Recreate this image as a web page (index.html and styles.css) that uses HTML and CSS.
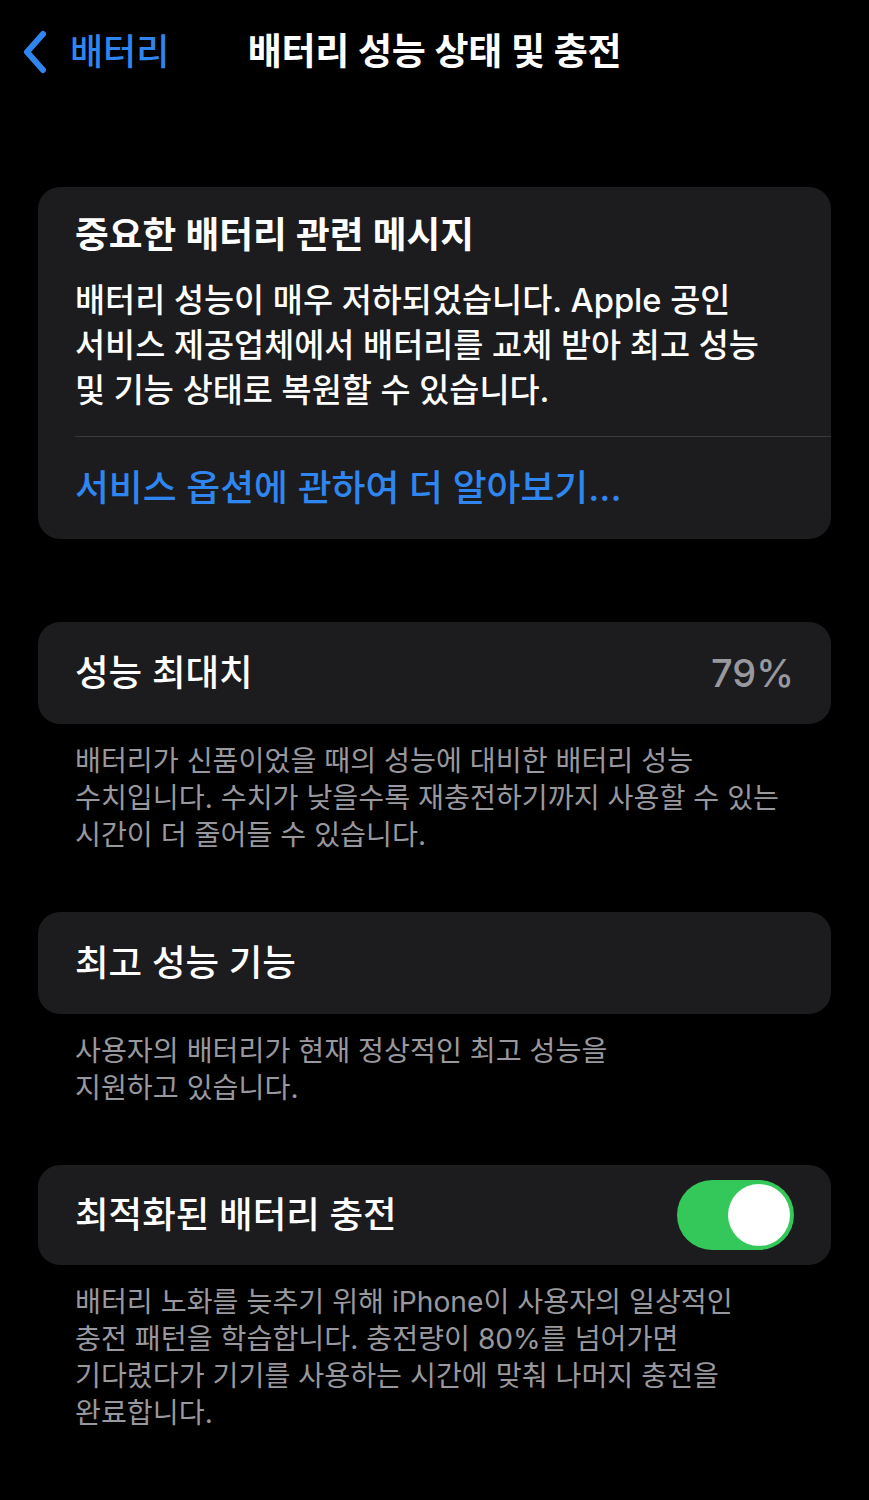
FILE: index.html
```html
<!DOCTYPE html>
<html lang="ko">
<head>
<meta charset="utf-8">
<title>배터리 성능 상태 및 충전</title>
<link rel="stylesheet" href="styles.css">
</head>
<body>
<header class="nav">
  <a class="back" href="#">
    <svg class="chevron" viewBox="0 0 26 44" width="26" height="44" aria-hidden="true">
      <path d="M21 4 L5 22 L21 40" fill="none" stroke="#2f86f0" stroke-width="6" stroke-linecap="round" stroke-linejoin="round"/>
    </svg>
    <span class="back-label">배터리</span>
  </a>
  <h1 class="nav-title">배터리 성능 상태 및 충전</h1>
  <span></span>
</header>

<main class="content">
  <section class="card message">
    <h2 class="message-title">중요한 배터리 관련 메시지</h2>
    <p class="message-body">배터리 성능이 매우 저하되었습니다. Apple 공인<br>서비스 제공업체에서 배터리를 교체 받아 최고 성능<br>및 기능 상태로 복원할 수 있습니다.</p>
    <div class="separator"></div>
    <a class="link" href="#">서비스 옵션에 관하여 더 알아보기...</a>
  </section>

  <section class="group first-group">
    <div class="card row">
      <span class="row-label">성능 최대치</span>
      <span class="row-value">79%</span>
    </div>
    <p class="footer">배터리가 신품이었을 때의 성능에 대비한 배터리 성능<br>수치입니다. 수치가 낮을수록 재충전하기까지 사용할 수 있는<br>시간이 더 줄어들 수 있습니다.</p>
  </section>

  <section class="group">
    <div class="card row">
      <span class="row-label">최고 성능 기능</span>
    </div>
    <p class="footer">사용자의 배터리가 현재 정상적인 최고 성능을<br>지원하고 있습니다.</p>
  </section>

  <section class="group">
    <div class="card row row-toggle">
      <span class="row-label">최적화된 배터리 충전</span>
      <span class="toggle on"><span class="knob"></span></span>
    </div>
    <p class="footer">배터리 노화를 늦추기 위해 iPhone이 사용자의 일상적인<br>충전 패턴을 학습합니다. 충전량이 80%를 넘어가면<br>기다렸다가 기기를 사용하는 시간에 맞춰 나머지 충전을<br>완료합니다.</p>
  </section>
</main>
</body>
</html>
```

FILE: styles.css
```css
* { box-sizing: border-box; }

html, body {
  margin: 0;
  padding: 0;
  background: #000;
}

body {
  font-family: "Inter", "Noto Sans CJK KR", sans-serif;
  color: #fff;
  width: 869px;
  min-height: 1500px;
}

.nav {
  display: grid;
  grid-template-columns: 1fr auto 1fr;
  align-items: center;
  height: 104px;
  padding: 0 22px;
}

.back {
  display: flex;
  align-items: center;
  gap: 22px;
  text-decoration: none;
  color: #2f86f0;
}

.chevron { display: block; }

.back-label {
  font-size: 36px;
  font-weight: 500;
  line-height: 44px;
}

.nav-title {
  margin: 0;
  font-size: 37px;
  font-weight: 600;
  line-height: 44px;
  letter-spacing: -0.3px;
}

.content {
  padding: 83px 38px 0;
}

.card {
  background: #1c1c1e;
  border-radius: 22px;
}

.message {
  padding: 25px 0 28px 37px;
}

.message-title {
  margin: 0;
  font-size: 36.7px;
  font-weight: 600;
  line-height: 46px;
}

.message-body {
  margin: 20px 37px 23px 0;
  font-size: 32.7px;
  font-weight: 500;
  line-height: 45px;
}

.separator {
  height: 1px;
  background: #3a3a3c;
}

.link {
  display: block;
  margin-top: 28px;
  font-size: 36.8px;
  font-weight: 500;
  line-height: 46px;
  color: #2f86f0;
  text-decoration: none;
}

.group { margin-top: 58px; }
.first-group { margin-top: 83px; }

.row {
  display: flex;
  align-items: center;
  justify-content: space-between;
  height: 102px;
  padding: 0 37px;
}

.row-toggle { height: 100px; }

.row-label {
  font-size: 36.5px;
  font-weight: 500;
  line-height: 46px;
}

.row-value {
  font-size: 38px;
  font-weight: 500;
  color: #98989e;
}

.toggle {
  display: flex;
  align-items: center;
  justify-content: flex-end;
  width: 117px;
  height: 70px;
  padding: 4px;
  border-radius: 35px;
  background: #34c759;
}

.knob {
  width: 62px;
  height: 62px;
  border-radius: 50%;
  background: #fff;
}

.footer {
  margin: 19px 0 0;
  padding-left: 37px;
  font-size: 28.2px;
  font-weight: 400;
  line-height: 37px;
  color: #98989e;
}
```
